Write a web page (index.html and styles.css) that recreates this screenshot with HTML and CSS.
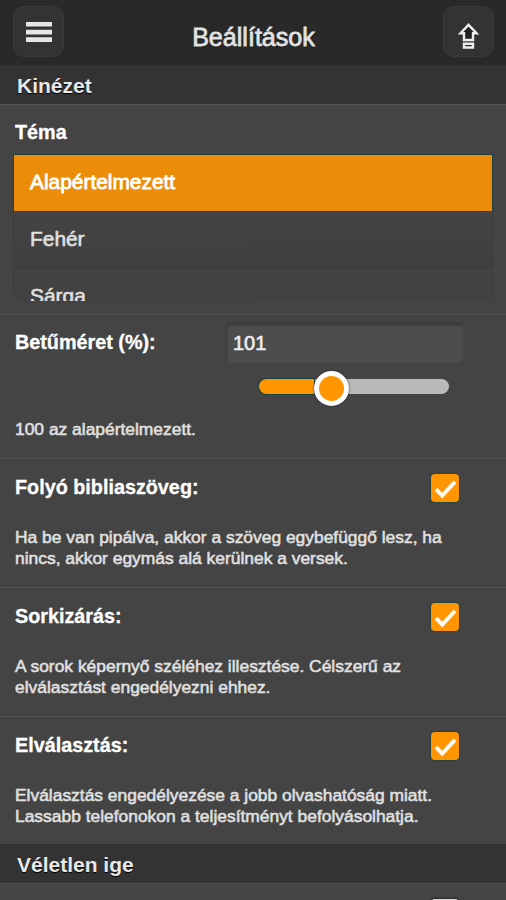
FILE: index.html
```html
<!DOCTYPE html>
<html lang="hu">
<head>
<meta charset="utf-8">
<title>Beállítások</title>
<link rel="stylesheet" href="styles.css">
</head>
<body>
<header class="bar">
  <button class="btn" aria-label="Menü"><svg width="50" height="50" viewBox="0 0 50 50"><path d="M12 17.2h26M12 25.1h26M12 32.6h26" class="lines"/></svg></button>
  <h1 class="title">Beállítások</h1>
  <button class="btn" aria-label="Fel"><svg width="50" height="50" viewBox="0 0 50 50"><path d="M24.5 17.8L16.5 26.2H20V33H29V26.2H32.5Z" class="arrow"/><path d="M20 36.8h9v3.7h-9z" class="arrow"/></svg></button>
</header>
<main>
  <h2 class="divider">Kinézet</h2>
  <section class="row theme">
    <h3 class="label">Téma</h3>
    <ul class="list">
      <li class="option selected">Alapértelmezett</li>
      <li class="option">Fehér</li>
      <li class="option">Sárga</li>
    </ul>
  </section>
  <section class="row size">
    <div class="line">
      <h3 class="label">Betűméret (%):</h3>
      <div class="field">
        <div class="input">101</div>
        <div class="track"><div class="fill"></div><div class="knob"></div></div>
      </div>
    </div>
    <p class="note">100 az alapértelmezett.</p>
  </section>
  <section class="row check">
    <div class="line"><h3 class="label">Folyó bibliaszöveg:</h3><span class="box"><svg width="28" height="28" viewBox="0 0 28 28"><path d="M5 15.2l6.2 6.4L24 7.9" class="tick"/></svg></span></div>
    <p class="note">Ha be van pipálva, akkor a szöveg egybefüggő lesz, ha<br>nincs, akkor egymás alá kerülnek a versek.</p>
  </section>
  <section class="row check">
    <div class="line"><h3 class="label">Sorkizárás:</h3><span class="box"><svg width="28" height="28" viewBox="0 0 28 28"><path d="M5 15.2l6.2 6.4L24 7.9" class="tick"/></svg></span></div>
    <p class="note">A sorok képernyő széléhez illesztése. Célszerű az<br>elválasztást engedélyezni ehhez.</p>
  </section>
  <section class="row check last">
    <div class="line"><h3 class="label">Elválasztás:</h3><span class="box"><svg width="28" height="28" viewBox="0 0 28 28"><path d="M5 15.2l6.2 6.4L24 7.9" class="tick"/></svg></span></div>
    <p class="note">Elválasztás engedélyezése a jobb olvashatóság miatt.<br>Lassabb telefonokon a teljesítményt befolyásolhatja.</p>
  </section>
  <h2 class="divider">Véletlen ige</h2>
  <section class="row check">
    <div class="line"><h3 class="label">Értesítés:</h3><span class="box off"></span></div>
  </section>
</main>
</body>
</html>
```
FILE: styles.css
```css
* { box-sizing: border-box; margin: 0; padding: 0; }
body {
  width: 506px;
  height: 900px;
  overflow: hidden;
  background: #444;
  color: #fff;
  font-family: "Liberation Sans", Arial, sans-serif;
  font-size: 19.8px;
  line-height: 24px;
}
h1, h2, h3 { font-weight: 700; font-size: inherit; }
.bar {
  display: flex;
  justify-content: space-between;
  height: 65px;
  padding: 6px 12px 0 13px;
  background: #292929;
}
.btn {
  width: 51px;
  height: 51px;
  border: 1px solid #3a3a3a;
  border-radius: 11px;
  background: #333;
}
.btn svg { display: block; }
.lines { stroke: #e6e6e6; stroke-width: 4.6; fill: none; }
.arrow { fill: #222; stroke: #eee; stroke-width: 2.4; }
.title {
  margin-top: 16px;
  font-size: 25.1px;
  font-weight: 400;
  line-height: 30px;
  color: #e2e2e2;
  -webkit-text-stroke: .8px #e2e2e2;
  text-shadow: 0 1px 1px #000;
}
.divider {
  height: 39px;
  padding: 9px 17px 0;
  background: #333;
  color: #e8e8e8;
  font-size: 21px;
  text-shadow: 0 1px 1px #000;
}
.row {
  height: 129px;
  padding: 16px 15px 0;
  border-top: 1px solid #525252;
}
.label { -webkit-text-stroke: .3px #fff; }
.theme { height: 210px; padding: 15px 13px 0; border-top-color: #555; }
.theme .label { padding-left: 2px; }
.list {
  height: 147px;
  margin-top: 10px;
  overflow: hidden;
  list-style: none;
  border-radius: 0 0 6px 6px;
}
.option {
  height: 58px;
  padding: 14px 16px 0;
  border: 1px solid #3c3c3c;
  border-top-color: #4a4a4a;
  background: linear-gradient(#444, #3f3f3f);
  color: #e0e0e0;
  font-size: 20.9px;
  -webkit-text-stroke: .6px #e0e0e0;
}
.option:last-child { padding-top: 13px; }
.selected {
  padding-top: 15px;
  border-color: #20413a;
  background: #ec8d09;
  color: #fff;
  -webkit-text-stroke: .8px #fff;
}
.size { height: 144px; padding-top: 7px; }
.line { display: flex; justify-content: space-between; height: 24px; }
.size .line { height: 73px; }
.size .label { margin-top: 8px; }
.field { width: 239px; margin-right: 27px; }
.input {
  height: 41px;
  padding: 8px 7px;
  border: 1px solid #3d3d3d;
  border-right-color: #484848;
  border-bottom-color: #484848;
  border-radius: 5px;
  background: #4d4d4d;
  box-shadow: inset 1px 2px 3px #383838;
  color: #eee;
  font-size: 20px;
  -webkit-text-stroke: .6px #eee;
}
.track {
  display: flex;
  align-items: center;
  width: 190px;
  height: 15px;
  margin: 16px 0 0 34px;
  border-radius: 8px;
  background: #b9b9b9;
}
.fill { width: 55px; height: 15px; border-radius: 8px 0 0 8px; background: #ff9500; box-shadow: 0 0 1px 1px #164144; }
.knob {
  flex: none;
  width: 35px;
  height: 35px;
  margin-top: 3px;
  border: 5px solid #fff;
  border-radius: 50%;
  background: #ff9500;
  box-shadow: 0 0 2px #222;
}
.note {
  font-size: 17.42px;
  line-height: 21px;
  color: #e0e0e0;
  -webkit-text-stroke: .55px #e0e0e0;
  white-space: nowrap;
}
.size .note { margin-top: 24px; }
.check .note { margin-top: 28px; }
.box {
  width: 28px;
  height: 28px;
  margin: -1px 32px 0 0;
  border-radius: 4px;
  background: #ff9500;
  box-shadow: 0 0 1px 1px #264641;
}
.box svg { display: block; }
.tick { fill: none; stroke: #fff8ee; stroke-width: 4; }
.last { height: 128px; }
.off { background: #ddd; box-shadow: 0 0 2px 1px #222; }
```
